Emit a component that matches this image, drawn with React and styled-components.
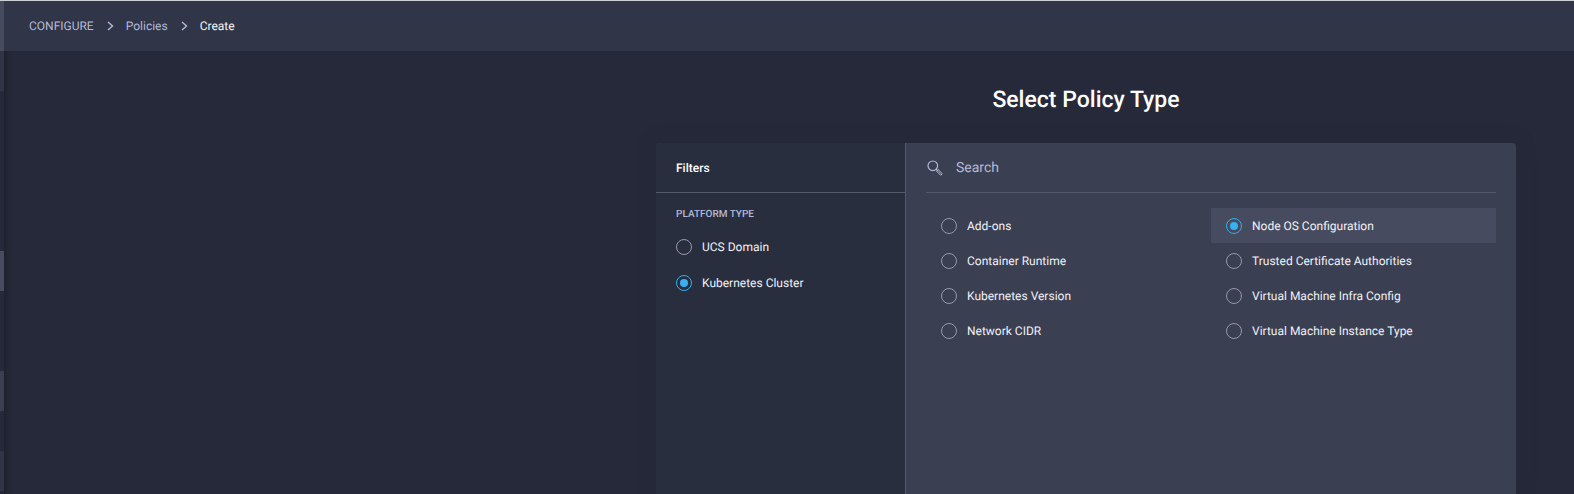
import React from 'react';
import styled, { createGlobalStyle } from 'styled-components';

const GlobalStyle = createGlobalStyle`
  * { box-sizing: border-box; }
  body {
    margin: 0;
    background: #26293a;
    font-family: Roboto, "Liberation Sans", sans-serif;
    font-size: 12px;
    color: #f0f1f6;
    overflow: hidden;
    text-rendering: geometricPrecision;
  }
`;

const Page = styled.div`
  display: flex;
  height: 494px;
  border-top: 1px solid #ccd0d4;
  overflow: hidden;
`;

const NavEdge = styled.div`
  flex: 0 0 4px;
  display: flex;
  flex-direction: column;
  background: #26293a;
`;

const NavBlock = styled.div`
  flex: 0 0 ${(p) => p.$height}px;
  background: ${(p) => p.$color};
`;

const Main = styled.div`
  flex: 1;
  min-width: 0;
  display: flex;
  flex-direction: column;
`;

const Header = styled.header`
  flex: 0 0 50px;
  display: flex;
  align-items: center;
  padding-left: 25px;
  background: #303547;
`;

const Crumb = styled.span`
  line-height: 16px;
  color: ${(p) => (p.$current ? '#f4f5f9' : '#b4b9d6')};
`;

const CrumbArrow = styled.svg`
  width: 7px;
  height: 10px;
  margin: 0 12px 0 13px;
  fill: none;
  stroke: #b4b9d6;
  stroke-width: 1.4;
`;

const Content = styled.main`
  flex: 1;
  display: flex;
  flex-direction: column;
  align-items: flex-end;
  padding-right: 58px;
  background: linear-gradient(to right, #1f212e, #242737 5px, #26293a 10px);
`;

const Title = styled.h1`
  width: 860px;
  margin: 34px 0 28px;
  font-size: 23px;
  line-height: 30px;
  font-weight: 500;
  text-align: center;
  color: #fff;
`;

const Panel = styled.section`
  flex: 1;
  width: 860px;
  display: flex;
  border-radius: 4px 4px 0 0;
  overflow: hidden;
  background: #3b3f52;
  box-shadow: 0 0 20px rgba(36, 38, 44, 0.25);
`;

const Filters = styled.aside`
  flex: 0 0 250px;
  border-right: 1px solid #54586b;
  background: #292e3f;
`;

const FiltersTitle = styled.h2`
  margin: 0;
  height: 50px;
  padding: 0 20px;
  border-bottom: 1px solid #54586b;
  font-size: 12px;
  line-height: 50px;
  font-weight: 500;
  color: #fff;
`;

const GroupLabel = styled.h3`
  margin: 13px 20px 6px;
  font-size: 10px;
  line-height: 17px;
  font-weight: 500;
  color: #b4b9d6;
`;

const FilterOption = styled.label`
  display: flex;
  align-items: center;
  gap: 10px;
  height: 36px;
  padding-left: 20px;
`;

const Results = styled.div`
  flex: 1;
  padding: 0 20px;
`;

const SearchBar = styled.div`
  display: flex;
  align-items: center;
  height: 50px;
  border-bottom: 1px solid #54586b;
  font-size: 14px;
  color: #b4b9d6;
`;

const SearchIcon = styled.svg`
  width: 16px;
  height: 16px;
  margin: 0 13px 0 1px;
  fill: none;
  stroke: #b4b9d6;
`;

const SearchHint = styled.span`
  padding-top: 2px;
  line-height: 17px;
`;

const PolicyGrid = styled.div`
  display: grid;
  grid-template: repeat(4, 35px) / 285px 285px;
  grid-auto-flow: column;
  margin-top: 15px;
`;

const PolicyOption = styled.label`
  display: flex;
  align-items: center;
  gap: 10px;
  padding-left: 15px;
  background: ${(p) => (p.$selected ? '#474b5f' : 'transparent')};
`;

const RadioDot = styled.span`
  flex: 0 0 16px;
  height: 16px;
  display: grid;
  place-items: center;
  border: 1px solid ${(p) => (p.$on ? '#2faef0' : '#9699ac')};
  border-radius: 50%;

  &::after {
    content: '';
    width: 8px;
    height: 8px;
    border-radius: 50%;
    background: ${(p) => (p.$on ? '#38b0f2' : 'transparent')};
  }
`;

const OptionText = styled.span`
  line-height: 16px;
  white-space: nowrap;
`;

const navBlocks = [
  [50, '#474b5e'],
  [40, '#2f3446'],
  [160, '#26293a'],
  [40, '#484c61'],
  [80, '#26293a'],
  [40, '#3b3f52'],
  [40, '#26293a'],
  [40, '#2f3446'],
];

const platforms = ['UCS Domain', 'Kubernetes Cluster'];

const policies = [
  'Add-ons',
  'Container Runtime',
  'Kubernetes Version',
  'Network CIDR',
  'Node OS Configuration',
  'Trusted Certificate Authorities',
  'Virtual Machine Infra Config',
  'Virtual Machine Instance Type',
];

const Arrow = () => (
  <CrumbArrow viewBox="0 0 7 10">
    <path d="M1 1l4.5 4L1 9" />
  </CrumbArrow>
);

export default function App() {
  return (
    <>
      <GlobalStyle />
      <Page>
        <NavEdge>
          {navBlocks.map(([height, color], i) => (
            <NavBlock key={i} $height={height} $color={color} />
          ))}
        </NavEdge>
        <Main>
          <Header>
            <Crumb>CONFIGURE</Crumb>
            <Arrow />
            <Crumb>Policies</Crumb>
            <Arrow />
            <Crumb $current>Create</Crumb>
          </Header>
          <Content>
            <Title>Select Policy Type</Title>
            <Panel>
              <Filters>
                <FiltersTitle>Filters</FiltersTitle>
                <GroupLabel>PLATFORM TYPE</GroupLabel>
                {platforms.map((name) => (
                  <FilterOption key={name}>
                    <RadioDot $on={name === 'Kubernetes Cluster'} />
                    <OptionText>{name}</OptionText>
                  </FilterOption>
                ))}
              </Filters>
              <Results>
                <SearchBar>
                  <SearchIcon viewBox="0 0 16 16">
                    <circle cx="5.8" cy="5.8" r="4.8" strokeWidth="1.2" />
                    <path d="M9.1 9.1l1.5 1.5" strokeWidth="1.2" />
                    <path d="M9.5 11.1l1.6-1.6 4.2 4.2-1.6 1.6z" strokeWidth="1" />
                    <path d="M11 11l2.8 2.8" strokeWidth="0.6" />
                  </SearchIcon>
                  <SearchHint>Search</SearchHint>
                </SearchBar>
                <PolicyGrid>
                  {policies.map((name) => {
                    const selected = name === 'Node OS Configuration';
                    return (
                      <PolicyOption key={name} $selected={selected}>
                        <RadioDot $on={selected} />
                        <OptionText>{name}</OptionText>
                      </PolicyOption>
                    );
                  })}
                </PolicyGrid>
              </Results>
            </Panel>
          </Content>
        </Main>
      </Page>
    </>
  );
}
